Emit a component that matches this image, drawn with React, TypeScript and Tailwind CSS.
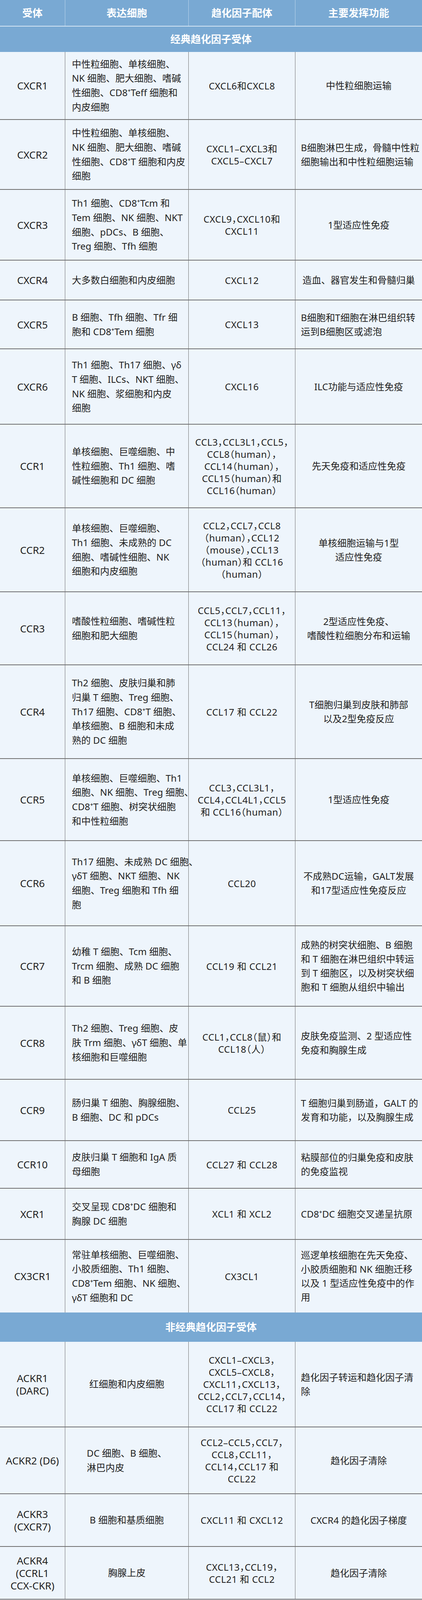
import React from 'react';

type Align = 'left' | 'center';

interface Row {
  name: string[];
  h: string;
  cells: string[];
  ligands: string[];
  func: string[];
  funcAlign: Align;
  cellsCenter?: boolean;
}

const classic: Row[] = [
  {
    name: ['CXCR1'],
    h: 'h-[174px]',
    cells: ['中性粒细胞、单核细胞、', 'NK 细胞、肥大细胞、嗜碱', '性细胞、CD8⁺Teff 细胞和', '内皮细胞'],
    ligands: ['CXCL6和CXCL8'],
    func: ['中性粒细胞运输'],
    funcAlign: 'center',
  },
  {
    name: ['CXCR2'],
    h: 'h-[179px]',
    cells: ['中性粒细胞、单核细胞、', 'NK 细胞、肥大细胞、嗜碱', '性细胞、CD8⁺T 细胞和内皮', '细胞'],
    ligands: ['CXCL1–CXCL3和', 'CXCL5–CXCL7'],
    func: ['B细胞淋巴生成，骨髓中性粒', '细胞输出和中性粒细胞运输'],
    funcAlign: 'left',
  },
  {
    name: ['CXCR3'],
    h: 'h-[181px]',
    cells: ['Th1 细胞、CD8⁺Tcm 和', 'Tem 细胞、NK 细胞、NKT', '细胞、pDCs、B 细胞、', 'Treg 细胞、Tfh 细胞'],
    ligands: ['CXCL9，CXCL10和', 'CXCL11'],
    func: ['1型适应性免疫'],
    funcAlign: 'center',
  },
  {
    name: ['CXCR4'],
    h: 'h-[102px]',
    cells: ['大多数白细胞和内皮细胞'],
    ligands: ['CXCL12'],
    func: ['造血、器官发生和骨髓归巢'],
    funcAlign: 'center',
  },
  {
    name: ['CXCR5'],
    h: 'h-[125px]',
    cells: ['B 细胞、Tfh 细胞、Tfr 细', '胞和 CD8⁺Tem 细胞'],
    ligands: ['CXCL13'],
    func: ['B细胞和T细胞在淋巴组织转', '运到B细胞区或滤泡'],
    funcAlign: 'left',
  },
  {
    name: ['CXCR6'],
    h: 'h-[193px]',
    cells: ['Th1 细胞、Th17 细胞、γδ', 'T 细胞、ILCs、NKT 细胞、', 'NK 细胞、浆细胞和内皮', '细胞'],
    ligands: ['CXCL16'],
    func: ['ILC功能与适应性免疫'],
    funcAlign: 'center',
  },
  {
    name: ['CCR1'],
    h: 'h-[214px]',
    cells: ['单核细胞、巨噬细胞、中', '性粒细胞、Th1 细胞、嗜', '碱性细胞和 DC 细胞'],
    ligands: ['CCL3，CCL3L1，CCL5，', 'CCL8（human），', 'CCL14（human），', 'CCL15（human）和', 'CCL16（human）'],
    func: ['先天免疫和适应性免疫'],
    funcAlign: 'center',
  },
  {
    name: ['CCR2'],
    h: 'h-[215px]',
    cells: ['单核细胞、巨噬细胞、', 'Th1 细胞、未成熟的 DC', '细胞、嗜碱性细胞、NK', '细胞和内皮细胞'],
    ligands: ['CCL2，CCL7，CCL8', '（human），CCL12', '（mouse），CCL13', '（human）和 CCL16', '（human）'],
    func: ['单核细胞运输与1型', '适应性免疫'],
    funcAlign: 'center',
  },
  {
    name: ['CCR3'],
    h: 'h-[187px]',
    cells: ['嗜酸性粒细胞、嗜碱性粒', '细胞和肥大细胞'],
    ligands: ['CCL5，CCL7，CCL11，', 'CCL13（human），', 'CCL15（human），', 'CCL24 和 CCL26'],
    func: ['2型适应性免疫、', '嗜酸性粒细胞分布和运输'],
    funcAlign: 'center',
  },
  {
    name: ['CCR4'],
    h: 'h-[240px]',
    cells: ['Th2 细胞、皮肤归巢和肺', '归巢 T 细胞、Treg 细胞、', 'Th17 细胞、CD8⁺T 细胞、', '单核细胞、B 细胞和未成', '熟的 DC 细胞'],
    ligands: ['CCL17 和 CCL22'],
    func: ['T细胞归巢到皮肤和肺部', '以及2型免疫反应'],
    funcAlign: 'center',
  },
  {
    name: ['CCR5'],
    h: 'h-[210px]',
    cells: ['单核细胞、巨噬细胞、Th1', '细胞、NK 细胞、Treg 细胞、', 'CD8⁺T 细胞、树突状细胞', '和中性粒细胞'],
    ligands: ['CCL3，CCL3L1，', 'CCL4，CCL4L1，CCL5', '和 CCL16（human）'],
    func: ['1型适应性免疫'],
    funcAlign: 'center',
  },
  {
    name: ['CCR6'],
    h: 'h-[218px]',
    cells: ['Th17 细胞、未成熟 DC 细胞、', 'γδT 细胞、NKT 细胞、NK', '细胞、Treg 细胞和 Tfh 细', '胞'],
    ligands: ['CCL20'],
    func: ['不成熟DC运输，GALT发展', '和17型适应性免疫反应'],
    funcAlign: 'center',
  },
  {
    name: ['CCR7'],
    h: 'h-[206px]',
    cells: ['幼稚 T 细胞、Tcm 细胞、', 'Trcm 细胞、成熟 DC 细胞', '和 B 细胞'],
    ligands: ['CCL19 和 CCL21'],
    func: ['成熟的树突状细胞、B 细胞', '和 T 细胞在淋巴组织中转运', '到 T 细胞区，以及树突状细', '胞和 T 细胞从组织中输出'],
    funcAlign: 'left',
  },
  {
    name: ['CCR8'],
    h: 'h-[187px]',
    cells: ['Th2 细胞、Treg 细胞、皮', '肤 Trm 细胞、γδT 细胞、单', '核细胞和巨噬细胞'],
    ligands: ['CCL1，CCL8（鼠）和', 'CCL18（人）'],
    func: ['皮肤免疫监测、2 型适应性', '免疫和胸腺生成'],
    funcAlign: 'left',
  },
  {
    name: ['CCR9'],
    h: 'h-[157px]',
    cells: ['肠归巢 T 细胞、胸腺细胞、', 'B 细胞、DC 和 pDCs'],
    ligands: ['CCL25'],
    func: ['T 细胞归巢到肠道，GALT 的', '发育和功能，以及胸腺生成'],
    funcAlign: 'left',
  },
  {
    name: ['CCR10'],
    h: 'h-[122px]',
    cells: ['皮肤归巢 T 细胞和 IgA 质', '母细胞'],
    ligands: ['CCL27 和 CCL28'],
    func: ['粘膜部位的归巢免疫和皮肤', '的免疫监视'],
    funcAlign: 'left',
  },
  {
    name: ['XCR1'],
    h: 'h-[131px]',
    cells: ['交叉呈现 CD8⁺DC 细胞和', '胸腺 DC 细胞'],
    ligands: ['XCL1 和 XCL2'],
    func: ['CD8⁺DC 细胞交叉递呈抗原'],
    funcAlign: 'left',
  },
  {
    name: ['CX3CR1'],
    h: 'h-[186px]',
    cells: ['常驻单核细胞、巨噬细胞、', '小胶质细胞、Th1 细胞、', 'CD8⁺Tem 细胞、NK 细胞、', 'γδT 细胞和 DC'],
    ligands: ['CX3CL1'],
    func: ['巡逻单核细胞在先天免疫、', '小胶质细胞和 NK 细胞迁移', '以及 1 型适应性免疫中的作', '用'],
    funcAlign: 'left',
  },
];

const atypical: Row[] = [
  {
    name: ['ACKR1', '(DARC)'],
    h: 'h-[219px]',
    cells: ['红细胞和内皮细胞'],
    ligands: ['CXCL1–CXCL3，', 'CXCL5–CXCL8，', 'CXCL11，CXCL13，', 'CCL2，CCL7，CCL14，', 'CCL17 和 CCL22'],
    func: ['趋化因子转运和趋化因子清', '除'],
    funcAlign: 'left',
    cellsCenter: true,
  },
  {
    name: ['ACKR2 (D6)'],
    h: 'h-[171px]',
    cells: ['DC 细胞、B 细胞、', '淋巴内皮'],
    ligands: ['CCL2–CCL5，CCL7，', 'CCL8，CCL11，', 'CCL14，CCL17 和', 'CCL22'],
    func: ['趋化因子清除'],
    funcAlign: 'center',
    cellsCenter: true,
  },
  {
    name: ['ACKR3', '(CXCR7)'],
    h: 'h-[135px]',
    cells: ['B 细胞和基质细胞'],
    ligands: ['CXCL11 和 CXCL12'],
    func: ['CXCR4 的趋化因子梯度'],
    funcAlign: 'center',
    cellsCenter: true,
  },
  {
    name: ['ACKR4', '(CCRL1', 'CCX-CKR)'],
    h: 'h-[135px]',
    cells: ['胸腺上皮'],
    ligands: ['CXCL13，CCL19，', 'CCL21 和 CCL2'],
    func: ['趋化因子清除'],
    funcAlign: 'center',
    cellsCenter: true,
  },
];

function Lines({ lines }: { lines: string[] }) {
  return (
    <>
      {lines.map((l, i) => (
        <div key={i} className="whitespace-nowrap">
          {l}
        </div>
      ))}
    </>
  );
}

function DataRow({ row, last }: { row: Row; last: boolean }) {
  return (
    <div className={`flex ${row.h} ${last ? '' : 'border-b-2 border-[#6f6f6f]'}`}>
      <div className="w-[166px] shrink-0 flex flex-col items-center justify-center text-center text-[26px] leading-[32px] text-[#1f1f1f]">
        <Lines lines={row.name} />
      </div>
      <div
        className={`w-[316px] shrink-0 border-l border-[#6f6f6f] flex items-center text-[24px] leading-[36.7px] ${
          row.cellsCenter ? 'justify-center' : 'pl-[17px]'
        }`}
      >
        <div>
          <Lines lines={row.cells} />
        </div>
      </div>
      <div className="w-[273px] shrink-0 border-l border-[#6f6f6f] flex flex-col items-center justify-center text-center text-[24px] leading-[31px] tracking-[0.02em] [font-feature-settings:'halt']">
        <Lines lines={row.ligands} />
      </div>
      <div
        className={`flex-1 border-l border-[#6f6f6f] flex flex-col justify-center text-[24px] leading-[36px] ${
          row.funcAlign === 'center' ? 'items-center text-center' : 'items-start pl-[14px]'
        }`}
      >
        <Lines lines={row.func} />
      </div>
    </div>
  );
}

function Section({ title, h }: { title: string; h: string }) {
  return (
    <div className={`${h} bg-[#79a9d3] flex items-center justify-center text-white text-[26px] font-bold`}>
      {title}
    </div>
  );
}

export default function App() {
  return (
    <div
      className="w-[1080px] h-[4105px] bg-[#eef5fc] text-[#222222]"
      style={{ fontFamily: '"Noto Sans", "Noto Sans CJK SC", sans-serif' }}
    >
      {/* Header */}
      <div className="flex h-[68px] bg-[#79a9d3] text-white text-[26px] font-bold border-b-2 border-[#d6e6f4]">
        <div className="w-[166px] shrink-0 flex items-center justify-center">受体</div>
        <div className="w-[316px] shrink-0 border-l border-[#bcd5ec] flex items-center justify-center">表达细胞</div>
        <div className="w-[273px] shrink-0 border-l border-[#bcd5ec] flex items-center justify-center">趋化因子配体</div>
        <div className="flex-1 border-l border-[#bcd5ec] flex items-center justify-center">主要发挥功能</div>
      </div>

      <Section title="经典趋化因子受体" h="h-[65px]" />
      {classic.map((r, i) => (
        <DataRow key={r.name.join()} row={r} last={i === classic.length - 1} />
      ))}

      <Section title="非经典趋化因子受体" h="h-[75px]" />
      {atypical.map((r) => (
        <DataRow key={r.name.join()} row={r} last={false} />
      ))}
    </div>
  );
}
